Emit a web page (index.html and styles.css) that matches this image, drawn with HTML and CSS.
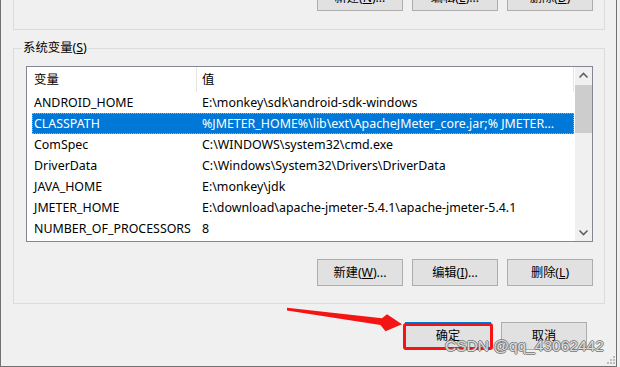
FILE: index.html
```html
<!DOCTYPE html>
<html lang="zh-CN">
<head>
<meta charset="utf-8">
<link rel="stylesheet" href="styles.css">
</head>
<body>
<div class="window">
  <div class="group group-top">
    <div class="btn-row">
      <button class="btn">新建(<u>N</u>)...</button>
      <button class="btn">编辑(<u>E</u>)...</button>
      <button class="btn">删除(<u>D</u>)</button>
    </div>
  </div>

  <div class="group group-sys">
    <span class="legend">系统变量(<u>S</u>)</span>
    <div class="listview">
      <div class="lv-main">
        <div class="lv-head">
          <div class="hcell h1">变量</div>
          <div class="hcell h2">值</div>
        </div>
        <div class="lv-row"><span class="c1">ANDROID_HOME</span><span class="c2">E:\monkey\sdk\android-sdk-windows</span></div>
        <div class="lv-row sel"><span class="c1">CLASSPATH</span><span class="c2">%JMETER_HOME%\lib\ext\ApacheJMeter_core.jar;% JMETER...</span></div>
        <div class="lv-row"><span class="c1">ComSpec</span><span class="c2">C:\WINDOWS\system32\cmd.exe</span></div>
        <div class="lv-row"><span class="c1">DriverData</span><span class="c2">C:\Windows\System32\Drivers\DriverData</span></div>
        <div class="lv-row"><span class="c1">JAVA_HOME</span><span class="c2">E:\monkey\jdk</span></div>
        <div class="lv-row"><span class="c1">JMETER_HOME</span><span class="c2">E:\download\apache-jmeter-5.4.1\apache-jmeter-5.4.1</span></div>
        <div class="lv-row"><span class="c1">NUMBER_OF_PROCESSORS</span><span class="c2">8</span></div>
      </div>
      <div class="scrollbar">
        <div class="sb-btn"><svg width="17" height="17" viewBox="0 0 17 17"><polyline points="4.5,10.5 8.5,6.5 12.5,10.5" fill="none" stroke="#606060" stroke-width="1.6"/></svg></div>
        <div class="sb-track"><div class="sb-thumb"></div></div>
        <div class="sb-btn"><svg width="17" height="17" viewBox="0 0 17 17"><polyline points="4.5,6.5 8.5,10.5 12.5,6.5" fill="none" stroke="#606060" stroke-width="1.6"/></svg></div>
      </div>
    </div>
    <div class="btn-row btn-row-sys">
      <button class="btn">新建(<u>W</u>)...</button>
      <button class="btn">编辑(<u>I</u>)...</button>
      <button class="btn">删除(<u>L</u>)</button>
    </div>
  </div>

  <div class="dlg-row">
    <button class="btn btn-default">确定</button>
    <button class="btn">取消</button>
  </div>

  <svg class="arrow" width="620" height="367" viewBox="0 0 620 367">
    <polygon points="287,307.8 382,318.2 387,314.2 402,324.2 385.5,331.2 380.5,325 287,310.6" fill="#f41414"/>
  </svg>
  <div class="watermark">CSDN @qq_43062442</div>
  <svg class="grip" width="10" height="10" viewBox="0 0 10 10">
    <rect x="7" y="1" width="2" height="2" fill="#bcbcbc"/>
    <rect x="4" y="4" width="2" height="2" fill="#bcbcbc"/>
    <rect x="7" y="4" width="2" height="2" fill="#bcbcbc"/>
    <rect x="1" y="7" width="2" height="2" fill="#bcbcbc"/>
    <rect x="4" y="7" width="2" height="2" fill="#bcbcbc"/>
    <rect x="7" y="7" width="2" height="2" fill="#bcbcbc"/>
  </svg>
</div>
</body>
</html>
```

FILE: styles.css
```css
html, body {
  margin: 0;
  padding: 0;
  background: #f0f0f0;
  overflow: hidden;
}
body {
  width: 620px;
  height: 367px;
  font-family: "Noto Sans", "Noto Sans CJK SC", sans-serif;
  font-size: 12.4px;
  color: #000;
}
.window {
  position: relative;
  width: 617px;
  height: 367px;
  box-sizing: border-box;
  border-left: 1px solid #717171;
  border-right: 1px solid #717171;
  border-bottom: 1px solid #717171;
  background: #f0f0f0;
  display: flex;
  flex-direction: column;
  align-items: stretch;
  overflow: hidden;
}
.group {
  box-sizing: border-box;
  width: 592px;
  margin-left: 12px;
  border: 1px solid #dcdcdc;
}
.group-top {
  margin-top: -30px;
  padding: 13px 11px 18px 0;
}
.group-sys {
  position: relative;
  margin-top: 18px;
  height: 256px;
  padding: 17px 11px 17px 12px;
}
.legend {
  position: absolute;
  left: 8px;
  top: -9px;
  padding: 0 1px;
  line-height: 16px;
  background: #f0f0f0;
  white-space: nowrap;
}
.btn-row {
  display: flex;
  justify-content: flex-end;
  gap: 9px;
}
.btn-row-sys {
  margin-top: 17px;
}
.btn {
  box-sizing: border-box;
  width: 86px;
  height: 27px;
  margin: 0;
  padding: 0;
  background: #e1e1e1;
  border: 1px solid #adadad;
  border-radius: 0;
  font-family: inherit;
  font-size: 12.2px;
  color: #000;
  line-height: 16px;
}
.btn u { text-underline-offset: 1px; }
.listview {
  box-sizing: border-box;
  width: 567px;
  height: 176px;
  border: 1px solid #828790;
  background: #fff;
  display: flex;
}
.lv-main {
  width: 548px;
  overflow: hidden;
}
.lv-head {
  display: flex;
  height: 25px;
}
.hcell {
  box-sizing: border-box;
  height: 25px;
  line-height: 25px;
  border-right: 1px solid #e5e5e5;
  white-space: nowrap;
}
.h1 { width: 170px; padding-left: 7px; }
.h2 { width: 377px; padding-left: 5px; }
.lv-row {
  display: flex;
  height: 21px;
  line-height: 21px;
  margin-left: 5px;
  width: 542px;
  box-sizing: border-box;
  white-space: nowrap;
}
.c1 {
  box-sizing: border-box;
  width: 170px;
  padding-left: 2px;
  flex: none;
  overflow: hidden;
}
.c2 {
  flex: 1;
  overflow: hidden;
}
.lv-row.sel {
  background: #0078d7;
  color: #fff;
  outline: 1px dotted #e9a23b;
  outline-offset: -1px;
}
.scrollbar {
  width: 17px;
  background: #f0f0f0;
  display: flex;
  flex-direction: column;
}
.sb-btn {
  height: 17px;
  flex: none;
}
.sb-btn svg { display: block; }
.sb-track {
  flex: 1;
}
.sb-thumb {
  margin-top: 1px;
  height: 48px;
  background: #cdcdcd;
}
.dlg-row {
  margin-top: 18px;
  padding-right: 29px;
  display: flex;
  justify-content: flex-end;
  gap: 10px;
}
.dlg-row .btn { height: 28px; }
.btn-default {
  position: relative;
  border-color: #0078d7;
}
.btn-default::after {
  content: "";
  position: absolute;
  left: -3px;
  right: -3px;
  top: 0;
  bottom: -1px;
  border: 3px solid #f41414;
  border-radius: 3px;
}
.arrow {
  position: absolute;
  left: -1px;
  top: 0;
  pointer-events: none;
}
.watermark {
  position: absolute;
  left: 444px;
  top: 337px;
  font-family: "Liberation Sans", Arial, sans-serif;
  font-size: 15.5px;
  line-height: 18px;
  color: rgba(240, 240, 240, 0.85);
  text-shadow: 1px 0 0 rgba(110,110,110,0.8), -1px 0 0 rgba(110,110,110,0.8), 0 1px 0 rgba(110,110,110,0.8), 0 -1px 0 rgba(110,110,110,0.8);
  white-space: nowrap;
}
.grip {
  position: absolute;
  right: 0;
  bottom: 1px;
}
```
